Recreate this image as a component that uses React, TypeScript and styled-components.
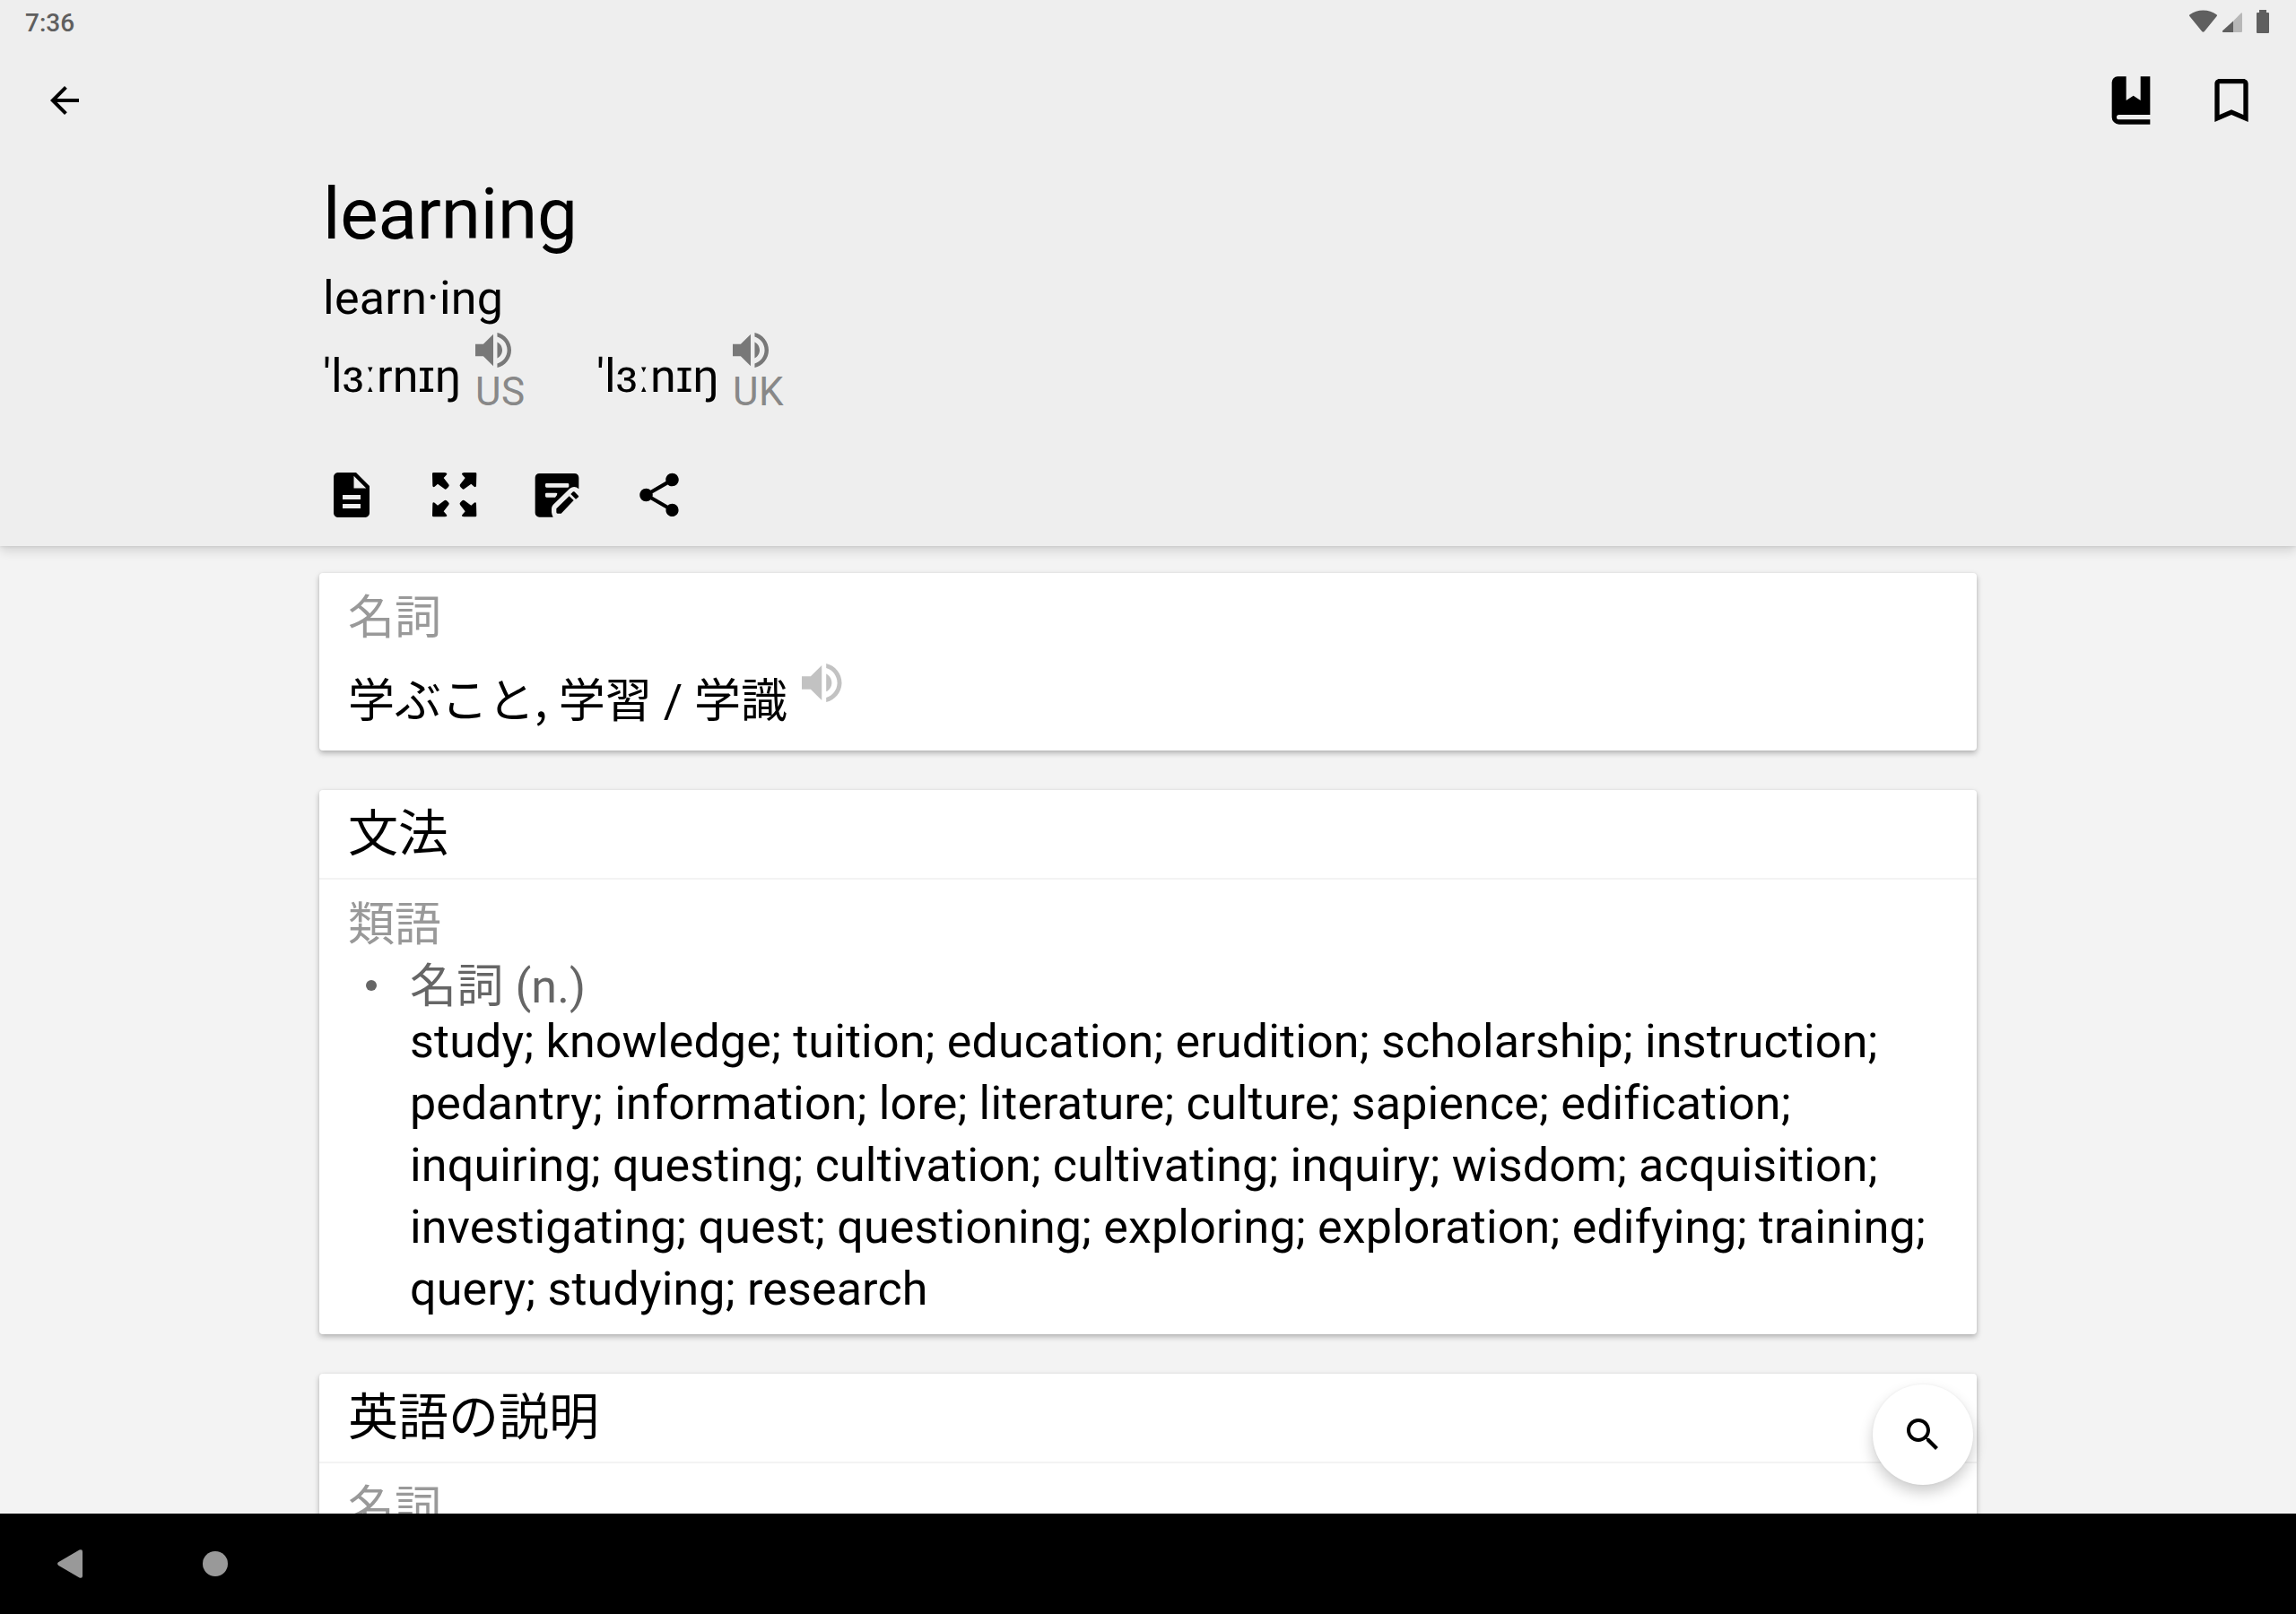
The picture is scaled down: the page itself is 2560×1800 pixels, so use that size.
import React from "react";
import styled, { createGlobalStyle } from "styled-components";

const GlobalStyle = createGlobalStyle`
  * { box-sizing: border-box; }
  body {
    margin: 0;
    background: #f3f3f3;
    color: #000;
    font-family: Roboto, "Noto Sans CJK JP", sans-serif;
  }
  svg { display: block; flex: none; }
`;

const Screen = styled.div`
  position: relative;
  display: flex;
  flex-direction: column;
  width: 2560px;
  height: 1800px;
  overflow: hidden;
`;

const Header = styled.header`
  position: relative;
  z-index: 1;
  flex: none;
  height: 609px;
  background: #eee;
  box-shadow: 0 5px 12px rgba(0, 0, 0, 0.14), 0 1px 3px rgba(0, 0, 0, 0.07);
`;

const StatusBar = styled.div`
  display: flex;
  justify-content: space-between;
  height: 48px;
  padding: 0 24px 0 28px;
  color: #5f5f5f;
`;

const Clock = styled.span`
  font-size: 28px;
  font-weight: 500;
  line-height: 52px;
`;

const Toolbar = styled.div`
  display: flex;
  align-items: center;
  justify-content: space-between;
  height: 128px;
  padding: 0 40px 0 48px;
`;

const ToolbarActions = styled.div`
  display: flex;
  gap: 48px;
`;

const Entry = styled.div`
  padding: 16px 360px 0;
`;

const Headword = styled.h1`
  margin: 0;
  font-size: 80px;
  font-weight: 400;
  letter-spacing: -0.2px;
  line-height: 94px;
`;

const Syllables = styled.div`
  margin-top: 16px;
  font-size: 52px;
  letter-spacing: 0.25px;
  line-height: 62px;
`;

const Pronunciations = styled.div`
  display: flex;
`;

const Pronunciation = styled.div<{ $width: number }>`
  display: flex;
  justify-content: space-between;
  width: ${(p) => p.$width}px;
  margin-right: 81px;
`;

const Ipa = styled.span`
  padding-top: 25px;
  font-size: 52px;
  line-height: 62px;
  white-space: nowrap;
`;

const Voice = styled.div`
  width: 54px;
  padding-top: 7px;
  color: #787878;
`;

const Region = styled.div`
  margin-top: 1px;
  color: #888;
  font-size: 44px;
  letter-spacing: 0.4px;
  line-height: 52px;
`;

const EntryActions = styled.div`
  display: flex;
  gap: 54px;
  margin-top: 59px;
  padding-left: 3px;
`;

const DocumentSlot = styled.span`
  margin: 0 1px 0 -1px;
`;

const ShareSlot = styled.span`
  padding: 1px 0 0 1px;
`;

const Content = styled.main`
  flex: 1;
  min-height: 0;
  overflow: hidden;
  display: flex;
  flex-direction: column;
  gap: 44px;
  padding: 30px 356px 0;
`;

const Card = styled.section<{ $height: number }>`
  flex: none;
  height: ${(p) => p.$height}px;
  background: #fff;
  border-radius: 4px;
  box-shadow: 0 3px 6px rgba(0, 0, 0, 0.27), 0 0 2px rgba(0, 0, 0, 0.08);
`;

const CardTitle = styled.h2`
  height: 100px;
  margin: 0;
  padding: 0 32px;
  border-bottom: 2px solid #f3f3f3;
  font-size: 56px;
  font-weight: 400;
  line-height: 98px;
`;

const CardBody = styled.div`
  padding: 20px 32px 0;
`;

const PartOfSpeech = styled.div`
  color: #999;
  font-size: 52px;
  line-height: 62px;
`;

const Definition = styled.div`
  display: flex;
  margin-top: 31px;
  font-size: 52px;
  line-height: 62px;
`;

const Comma = styled.span`
  font-family: "Noto Sans CJK JP", sans-serif;
  letter-spacing: 0.3px;
  line-height: 1;
`;

const Listen = styled.span`
  height: 43px;
  margin: -12px 0 0 16px;
  color: #c2c2c2;
`;

const SynonymGroup = styled.div`
  display: flex;
  margin-top: 11px;
`;

const Bullet = styled.span`
  flex: none;
  width: 12px;
  height: 12px;
  margin: 19px 37px 0 20px;
  border-radius: 50%;
  background: #666;
`;

const GroupLabel = styled.div`
  color: #666;
  font-size: 52px;
  letter-spacing: 0.16px;
  line-height: 54px;
`;

const Words = styled.p`
  margin: -1px 0 0;
  font-size: 52px;
  letter-spacing: 0.155px;
  line-height: 69px;
`;

const SearchButton = styled.button`
  position: absolute;
  left: 2088px;
  top: 1544px;
  z-index: 2;
  display: flex;
  align-items: center;
  justify-content: center;
  width: 112px;
  height: 112px;
  padding: 0;
  border: 0;
  border-radius: 50%;
  background: #fff;
  color: #000;
  box-shadow: 0 8px 16px rgba(0, 0, 0, 0.2), 0 0 3px rgba(0, 0, 0, 0.05);
`;

const NavBar = styled.nav`
  position: relative;
  z-index: 3;
  flex: none;
  display: flex;
  align-items: center;
  gap: 134px;
  height: 112px;
  padding-left: 64px;
  background: #000;
  color: #999;
`;

const HomeDot = styled.span`
  width: 28px;
  height: 28px;
  border-radius: 50%;
  background: #999;
`;

function Glyph({ size, d }: { size: number; d: string }) {
  return (
    <svg width={size} height={size} viewBox="0 0 24 24" fill="currentColor">
      <path d={d} />
    </svg>
  );
}

function Speaker({ width, height }: { width: number; height: number }) {
  return (
    <svg width={width} height={height} viewBox="3 3.23 18 17.54" preserveAspectRatio="none" fill="currentColor">
      <path d="M3 9v6h4l5 5V4L7 9H3zm13.5 3c0-1.77-1.02-3.29-2.5-4.03v8.05c1.48-.73 2.5-2.25 2.5-4.02zM14 3.23v2.06c2.89.86 5 3.54 5 6.71s-2.11 5.85-5 6.71v2.06c4.01-.91 7-4.49 7-8.77s-2.99-7.86-7-8.77z" />
    </svg>
  );
}

function StatusIcons() {
  return (
    <svg width="95" height="48" viewBox="2441 0 95 48" fill="currentColor">
      <path d="M2456.5 35.8q-.8 0-1.4-.8L2441.3 18q-.7-1 .3-1.8Q2448 11.5 2456.5 11.5t14.9 4.7q1 .8.3 1.8L2457.9 35q-.6.8-1.4.8z" />
      <path d="M2490 23.5V36h-11q-2-.5-.6-2z" />
      <path d="M2490 23.5l8.6-8.8q1.4-1 1.4.6V35q0 1-1 1h-9z" opacity=".38" />
      <path d="M2519 11h8v3h2q1 0 1 1v21q0 1-1 1h-12q-1 0-1-1V15q0-1 1-1h2z" />
    </svg>
  );
}

const arrow =
  "M4 0H42Q53 2 47 8L38 18L55 40Q58 44 54 48L48 54Q44 58 40 54L18 38L8 47Q2 51 1 44L0 4Q0 0 4 0Z";

function ExpandIcon() {
  return (
    <svg width="60" height="60" viewBox="-15 -15 180 180" fill="currentColor">
      <path d={arrow} />
      <path d={arrow} transform="translate(148 0) scale(-1 1)" />
      <path d={arrow} transform="translate(0 148) scale(1 -1)" />
      <path d={arrow} transform="translate(148 148) scale(-1 -1)" />
    </svg>
  );
}

function NoteEditIcon() {
  return (
    <svg width="60" height="60" viewBox="-17 -18 180 180" fill="currentColor" fillRule="evenodd">
      <path d="M14 0H132A14 14 0 0 1 146 14V52Q132 39 116 50L60 105Q55 110 55 118V130Q56 140 60 146H14A14 14 0 0 1 0 132V14A14 14 0 0 1 14 0ZM38 33Q34 33 34 37V43Q34 47 38 47H109Q113 47 113 43V37Q113 33 109 33ZM38 65Q34 65 34 69V76Q34 80 38 80H67Q74 73 74 68Q74 65 70 65Z" />
      <path d="M71 118L114 76L129 90L87 134H75Q71 134 71 130ZM119 69L127 61Q129 60 131 61L145 75Q146 77 145 79L136 86Z" />
    </svg>
  );
}

export default function App() {
  return (
    <Screen>
      <GlobalStyle />
      <Header>
        <StatusBar>
          <Clock>7:36</Clock>
          <StatusIcons />
        </StatusBar>
        <Toolbar>
          <Glyph size={48} d="M20 11H7.83l5.59-5.59L12 4l-8 8 8 8 1.41-1.41L7.83 13H20v-2z" />
          <ToolbarActions>
            <Glyph size={64} d="M6.4 2H10v10l3-2 3 2V2h4v16H7a1 1 0 0 0 0 2h13v2H7a3 3 0 0 1-3-3V4.4A2.4 2.4 0 0 1 6.4 2z" />
            <Glyph size={64} d="M17 3H7c-1.1 0-1.99.9-1.99 2L5 21l7-3 7 3V5c0-1.1-.9-2-2-2zm0 15l-5-2.18L7 18V5h10v13z" />
          </ToolbarActions>
        </Toolbar>
        <Entry>
          <Headword>learning</Headword>
          <Syllables>learn·ing</Syllables>
          <Pronunciations>
            <Pronunciation $width={224}>
              <Ipa>'lɜːrnɪŋ</Ipa>
              <Voice>
                <Speaker width={40} height={39} />
                <Region>US</Region>
              </Voice>
            </Pronunciation>
            <Pronunciation $width={206}>
              <Ipa>'lɜːnɪŋ</Ipa>
              <Voice>
                <Speaker width={40} height={39} />
                <Region>UK</Region>
              </Voice>
            </Pronunciation>
          </Pronunciations>
          <EntryActions>
            <DocumentSlot>
              <Glyph size={60} d="M14 2H6c-1.1 0-1.99.9-1.99 2L4 20c0 1.1.89 2 1.99 2H18c1.1 0 2-.9 2-2V8l-6-6zm2 16H8v-2h8v2zm0-4H8v-2h8v2zm-3-5V3.5L18.5 9H13z" />
            </DocumentSlot>
            <ExpandIcon />
            <NoteEditIcon />
            <ShareSlot>
              <Glyph size={58} d="M18 16.08c-.76 0-1.44.3-1.96.77L8.91 12.7c.05-.23.09-.46.09-.7s-.04-.47-.09-.7l7.05-4.11c.54.5 1.25.81 2.04.81 1.66 0 3-1.34 3-3s-1.34-3-3-3-3 1.34-3 3c0 .24.04.47.09.7L8.04 9.81C7.5 9.31 6.79 9 6 9c-1.66 0-3 1.34-3 3s1.34 3 3 3c.79 0 1.5-.31 2.04-.81l7.12 4.16c-.05.21-.08.43-.08.65 0 1.61 1.31 2.92 2.92 2.92s2.92-1.31 2.92-2.92-1.31-2.92-2.92-2.92z" />
            </ShareSlot>
          </EntryActions>
        </Entry>
      </Header>
      <Content>
        <Card $height={198}>
          <CardBody>
            <PartOfSpeech>名詞</PartOfSpeech>
            <Definition>
              <span>学ぶこと<Comma>, </Comma>学習 / 学識</span>
              <Listen>
                <Speaker width={44.5} height={43} />
              </Listen>
            </Definition>
          </CardBody>
        </Card>
        <Card $height={607}>
          <CardTitle>文法</CardTitle>
          <CardBody>
            <PartOfSpeech>類語</PartOfSpeech>
            <SynonymGroup>
              <Bullet />
              <div>
                <GroupLabel>名詞 (n.)</GroupLabel>
                <Words>
                  study; knowledge; tuition; education; erudition; scholarship; instruction; pedantry;
                  information; lore; literature; culture; sapience; edification; inquiring; questing;
                  cultivation; cultivating; inquiry; wisdom; acquisition; investigating; quest;
                  questioning; exploring; exploration; edifying; training; query; studying; research
                </Words>
              </div>
            </SynonymGroup>
          </CardBody>
        </Card>
        <Card $height={400}>
          <CardTitle>英語の説明</CardTitle>
          <CardBody>
            <PartOfSpeech>名詞</PartOfSpeech>
          </CardBody>
        </Card>
      </Content>
      <SearchButton aria-label="検索">
        <Glyph size={48} d="M15.5 14h-.79l-.28-.27C15.41 12.59 16 11.11 16 9.5 16 5.91 13.09 3 9.5 3S3 5.91 3 9.5 5.91 16 9.5 16c1.61 0 3.09-.59 4.23-1.57l.27.28v.79l5 4.99L20.49 19l-4.99-5zm-6 0C7.01 14 5 11.99 5 9.5S7.01 5 9.5 5 14 7.01 14 9.5 11.99 14 9.5 14z" />
      </SearchButton>
      <NavBar>
        <svg width="28" height="32" viewBox="0 0 28 32" fill="currentColor">
          <path d="M1 14.3L24.5.5Q28-.8 28 2.5V29.5Q28 32.8 24.5 31.5L1 17.7Q-.8 16 1 14.3z" />
        </svg>
        <HomeDot />
      </NavBar>
    </Screen>
  );
}
